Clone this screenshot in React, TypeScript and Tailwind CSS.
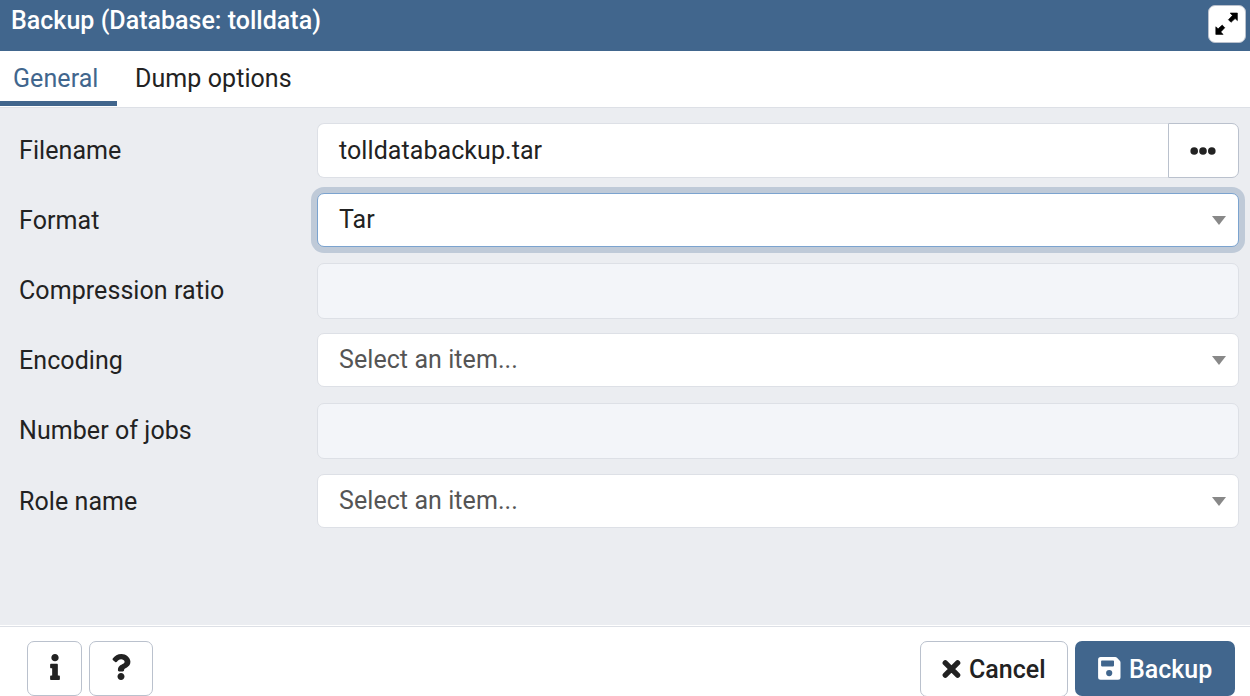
import type { ReactNode } from 'react';
import { FaInfo, FaQuestion } from 'react-icons/fa';

function ExpandIcon() {
  return (
    <svg width="24" height="24" viewBox="0 0 24 24" fill="currentColor" stroke="currentColor" strokeWidth="0.6" strokeLinejoin="round">
      <path d="M15.2 1H22.4V8.6L20.1 6.6L16 10.3L13.4 7.7L17.4 3.5Z" />
      <path d="M8.1 22.4H0.8V14.8L3.1 16.8L7.2 13.1L9.8 15.7L5.8 19.9Z" />
    </svg>
  );
}

function CrossIcon() {
  return (
    <svg width="19" height="18" viewBox="0 0 19 18" fill="none" stroke="currentColor" strokeWidth="5.4" strokeLinecap="round">
      <path d="M3.3 2.9L15.6 15.1M15.6 2.9L3.3 15.1" />
    </svg>
  );
}

function FloppyIcon() {
  return (
    <svg width="23" height="23" viewBox="0 0 23 23" fill="currentColor" fillRule="evenodd">
      <path d="M2.6 0H17.2Q18.3 0 19 0.7L21.8 3.7Q22.5 4.4 22.5 5.4V20.2Q22.5 22.7 20 22.7H2.6Q0.1 22.7 0.1 20.2V2.5Q0.1 0 2.6 0ZM3.9 3.4Q3.1 3.4 3.1 4.2V8.6Q3.1 9.4 3.9 9.4H15.2Q16 9.4 16 8.6V4.2Q16 3.4 15.2 3.4ZM11.2 13A3.1 3.1 0 1 0 11.2 19.2A3.1 3.1 0 1 0 11.2 13Z" />
    </svg>
  );
}

function Row({ label, className = '', children }: { label: string; className?: string; children: ReactNode }) {
  return (
    <div className={`flex h-[70px] shrink-0 items-start ${className}`}>
      <label className="w-[298px] shrink-0 pt-[13px] leading-[30px]">{label}</label>
      {children}
    </div>
  );
}

function Select({ value, placeholder, focused }: { value?: string; placeholder?: string; focused?: boolean }) {
  return (
    <div
      className={`flex h-[54px] w-[922px] items-center justify-between rounded-[7px] border bg-white pr-[12px] pl-[21px] ${
        focused ? 'border-[#7ba3cf] shadow-[0_0_0_6px_#bfcad8]' : 'border-[#dde0e6]'
      }`}
    >
      <span className={`leading-[30px] ${value ? 'text-[#222]' : 'text-[#555]'}`}>{value ?? placeholder}</span>
      <svg width="14" height="9" viewBox="0 0 14 9" className={focused ? '' : 'mt-px'}>
        <path d="M0 0H14L7 9Z" fill="#888" />
      </svg>
    </div>
  );
}

function DisabledInput() {
  return <div className="h-[56px] w-[922px] rounded-[7px] border border-[#dde0e6] bg-[#f3f5f9]" />;
}

export default function App() {
  return (
    <div className="flex h-[696px] w-[1250px] flex-col overflow-hidden bg-white font-['Roboto',sans-serif] text-[25px] tracking-[0.07px] text-[#222]">
      <header className="flex h-[51px] shrink-0 items-start justify-between bg-[#41668d] pr-[4px] pl-[11px]">
        <h1 className="pt-[6px] text-[25px] leading-[30px] font-medium tracking-[0.02px] text-white">Backup (Database: tolldata)</h1>
        <button className="mt-[5px] flex h-[38px] w-[38px] items-start rounded-[7px] border border-[#bac1cd] bg-white pt-[6px] pl-[6px] text-black">
          <ExpandIcon />
        </button>
      </header>

      <nav className="flex h-[57px] shrink-0 items-start border-b border-[#dde0e6]">
        <button className="flex h-[55px] w-[117px] items-start border-b-[5px] border-[#41668d] pt-[13px] pl-[13px] leading-[30px] text-[#41668d]">
          General
        </button>
        <button className="flex h-[55px] items-start pt-[13px] pl-[18px] leading-[30px]">Dump options</button>
      </nav>

      <main className="flex h-[517px] shrink-0 flex-col bg-[#ebedf1] pt-[15px] pl-[19px]">
        <Row label="Filename">
          <div className="flex h-[55px] w-[922px]">
            <div className="flex flex-1 items-center rounded-l-[7px] border border-r-0 border-[#dde0e6] bg-white pl-[21px]">
              tolldatabackup.tar
            </div>
            <button className="flex w-[71px] items-center justify-center rounded-r-[7px] border border-[#bac1cd] bg-white pr-px text-[#222]">
              <svg width="26" height="8" viewBox="0 0 26 8" fill="currentColor">
                <circle cx="4.2" cy="4" r="3.8" />
                <circle cx="13" cy="4" r="3.8" />
                <circle cx="21.8" cy="4" r="3.8" />
              </svg>
            </button>
          </div>
        </Row>
        <Row label="Format">
          <Select value="Tar" focused />
        </Row>
        <Row label="Compression ratio">
          <DisabledInput />
        </Row>
        <Row label="Encoding">
          <Select placeholder="Select an item..." />
        </Row>
        <Row label="Number of jobs">
          <DisabledInput />
        </Row>
        <Row label="Role name" className="mt-px">
          <Select placeholder="Select an item..." />
        </Row>
      </main>

      <footer className="mt-px flex flex-1 items-start border-t border-[#dde0e6] pt-[14px] pr-[15px] pl-[27px] font-medium tracking-normal">
        <button className="flex h-[55px] w-[55px] items-center justify-center rounded-[7px] border border-[#bac1cd] pb-[3px] text-[#222]">
          <FaInfo size={26} />
        </button>
        <button className="ml-[7px] flex h-[55px] w-[64px] items-center justify-center rounded-[7px] border border-[#bac1cd] pb-[3px] text-[#222]">
          <FaQuestion size={26} />
        </button>
        <button className="ml-auto flex h-[56px] w-[148px] items-start rounded-[7px] border border-[#bac1cd] pt-[13px] pl-[21px] leading-[30px]">
          <span className="pt-[5px]">
            <CrossIcon />
          </span>
          <span className="ml-[8px]">Cancel</span>
        </button>
        <button className="ml-[7px] flex h-[55px] w-[160px] items-start rounded-[7px] bg-[#41668d] pt-[14px] pl-[23px] leading-[30px] text-white">
          <span className="pt-[2px]">
            <FloppyIcon />
          </span>
          <span className="ml-[8px]">Backup</span>
        </button>
      </footer>
    </div>
  );
}
